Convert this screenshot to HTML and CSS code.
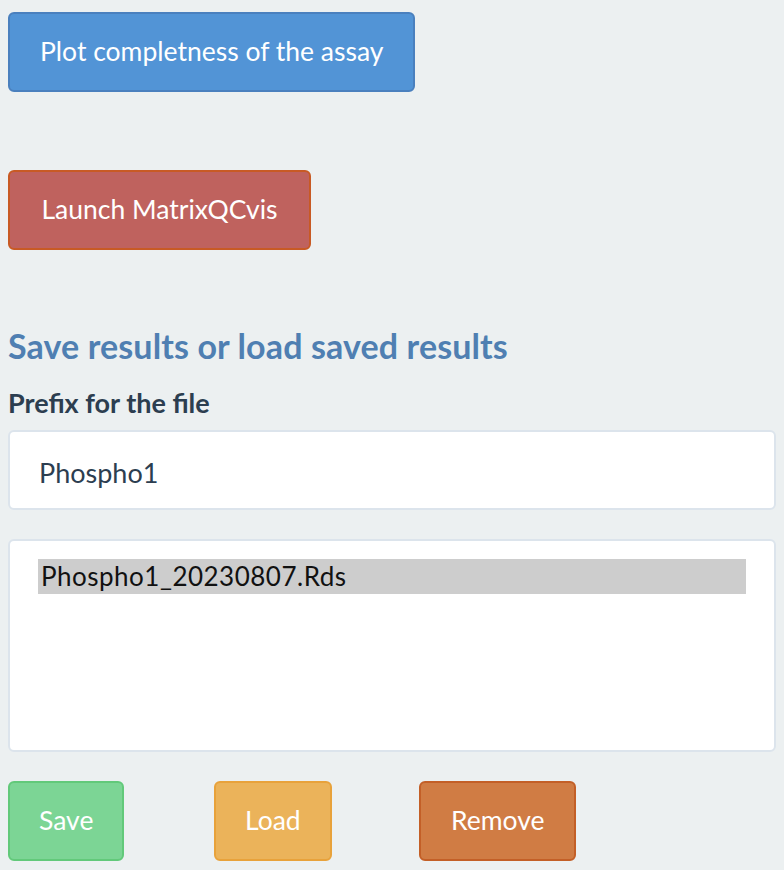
FILE: index.html
```html
<!DOCTYPE html>
<html>
<head>
<meta charset="utf-8">
<link rel="stylesheet" href="styles.css">
</head>
<body>
<div class="page">
  <div class="block">
    <button class="btn btn-blue">Plot completness of the assay</button>
  </div>
  <div class="block block-launch">
    <button class="btn btn-red">Launch MatrixQCvis</button>
  </div>
  <h3 class="heading">Save results or load saved results</h3>
  <label class="label">Prefix for the file</label>
  <div class="input">Phospho1</div>
  <div class="select">
    <div class="option selected">Phospho1_20230807.Rds</div>
  </div>
  <div class="actions">
    <div class="cell"><button class="btn btn-green">Save</button></div>
    <div class="cell"><button class="btn btn-yellow">Load</button></div>
    <div class="cell"><button class="btn btn-orange">Remove</button></div>
  </div>
</div>
</body>
</html>
```
FILE: styles.css
```css
html, body {
  margin: 0;
  padding: 0;
  background: #ecf0f1;
}
body {
  font-family: Lato, "Open Sans", sans-serif;
  color: #2c3e50;
}
.page {
  padding: 12px 8px 0 8px;
  display: flex;
  flex-direction: column;
  align-items: stretch;
}
.block {
  display: flex;
}
.block-launch {
  margin-top: 78px;
}
.btn {
  font-family: Lato, "Open Sans", sans-serif;
  font-size: 26.5px;
  color: #ffffff;
  border-radius: 6px;
  border: 2px solid;
  height: 80px;
  padding: 0 29px 2px 29px;
  box-sizing: border-box;
  line-height: 1;
  cursor: pointer;
}
.btn-blue {
  background: #5294d6;
  border-color: #4a80be;
  padding-left: 30px;
  padding-right: 30px;
}
.btn-red {
  background: #bf625e;
  border-color: #c85a24;
  padding-left: 31.5px;
  padding-right: 31.5px;
}
.heading {
  margin: 76px 0 0 0;
  font-size: 34px;
  font-weight: 700;
  letter-spacing: 0.12px;
  color: #4f7fb2;
  line-height: 40px;
}
.label {
  margin-top: 22px;
  font-size: 27px;
  font-weight: 700;
  color: #2c3e50;
  line-height: 30px;
}
.input {
  margin-top: 12px;
  height: 80px;
  box-sizing: border-box;
  background: #ffffff;
  border: 2px solid #dce4ec;
  border-radius: 6px;
  padding: 5px 29px 0 29px;
  display: flex;
  align-items: center;
  font-size: 27px;
  color: #2c3e50;
}
.select {
  margin-top: 29px;
  height: 213px;
  box-sizing: border-box;
  background: #ffffff;
  border: 2px solid #dce4ec;
  border-radius: 6px;
  padding: 18px 28px;
}
.option {
  height: 35px;
  line-height: 35px;
  font-size: 26px;
  letter-spacing: 0.5px;
  padding-left: 3px;
  color: #111111;
}
.option.selected {
  background: #cdcdcd;
}
.actions {
  margin-top: 29px;
  display: grid;
  grid-template-columns: 206px 205px 205px;
}
.cell {
  display: flex;
}
.btn-green {
  background: #7cd595;
  border-color: #62c97a;
}
.btn-yellow {
  background: #ebb35a;
  border-color: #e8a23b;
}
.btn-orange {
  background: #d07c44;
  border-color: #c35f27;
  padding-left: 30px;
  padding-right: 30px;
}
```
